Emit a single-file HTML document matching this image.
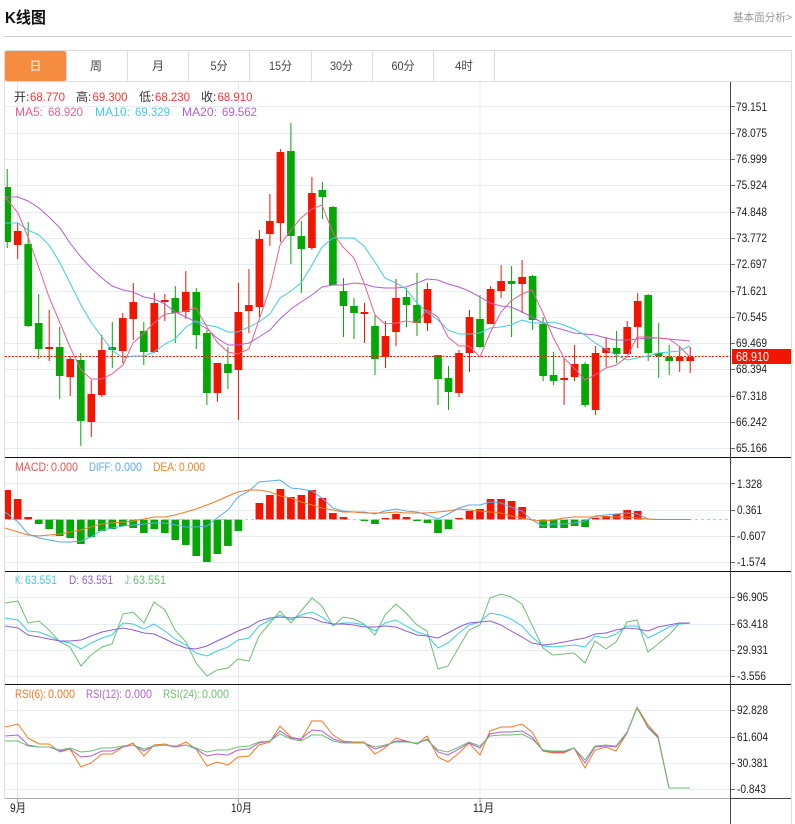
<!DOCTYPE html>
<html><head><meta charset="utf-8"><title>K线图</title>
<style>
html,body{margin:0;padding:0;background:#fff;width:795px;height:824px;overflow:hidden}
svg{display:block;font-family:"Liberation Sans","Noto Sans CJK SC",sans-serif}
.ax text{font-size:12px;fill:#222}
</style></head><body>
<svg width="795" height="824" viewBox="0 0 795 824" xmlns="http://www.w3.org/2000/svg">
<defs><clipPath id="c"><rect x="5" y="82" width="725" height="716"/></clipPath></defs>
<text x="5" y="23" font-size="16" font-weight="700" fill="#111" textLength="41" lengthAdjust="spacingAndGlyphs">K线图</text>
<text x="733" y="21" font-size="11" fill="#999" textLength="59" lengthAdjust="spacingAndGlyphs">基本面分析&gt;</text>
<path d="M4 36.5H792" stroke="#ccc" fill="none"/>
<path d="M4.5 50.5H791.5V824M4.5 50.5V798M4.5 81.5H791.5M66.5 50.5V81M127.5 50.5V81M188.5 50.5V81M249.5 50.5V81M311.5 50.5V81M372.5 50.5V81M433.5 50.5V81M494.5 50.5V81" stroke="#ddd" fill="none"/>
<rect x="5" y="51" width="61" height="30" rx="2" fill="#f58c40"/>
<g font-size="12" fill="#444" text-anchor="middle">
<text x="35.5" y="70" fill="#fff">日</text><text x="96" y="70">周</text><text x="158" y="70">月</text>
<text x="219" y="70" textLength="17" lengthAdjust="spacingAndGlyphs">5分</text><text x="280.5" y="70" textLength="23" lengthAdjust="spacingAndGlyphs">15分</text><text x="341.5" y="70" textLength="23" lengthAdjust="spacingAndGlyphs">30分</text><text x="403" y="70" textLength="23" lengthAdjust="spacingAndGlyphs">60分</text><text x="464" y="70" textLength="18" lengthAdjust="spacingAndGlyphs">4时</text>
</g>
<!-- grid -->
<path d="M5 106.5H730M5 133.5H730M5 159.5H730M5 185.5H730M5 212.5H730M5 238.5H730M5 264.5H730M5 291.5H730M5 317.5H730M5 343.5H730M5 369.5H730M5 396.5H730M5 422.5H730M5 448.5H730M5 483.5H730M5 510.5H730M5 536.5H730M5 562.5H730M5 597.5H730M5 624.5H730M5 650.5H730M5 676.5H730M5 710.5H730M5 737.5H730M5 763.5H730M5 789.5H730" stroke="#e6eef4" fill="none"/>
<path d="M17.5 82V798M238.5 82V798" stroke="#e2e9ef" fill="none"/>
<path d="M480 82V798" stroke="#e8eff6" fill="none"/>
<g clip-path="url(#c)" fill="none">
<!-- red wicks -->
<path stroke="#f21600" stroke-width="1" d="M17.7 223V259M49.2 310V361M70.2 356V396M91.3 380V437M101.8 335V397M122.8 313V363M133.3 283V340M154.3 293V353M164.8 294V321M185.8 271V319M217.4 363V402M238.4 283V420M248.9 269V333M259.4 230V317M269.9 194V246M280.4 149V242M311.9 177V250M364.5 303V343M385.5 321V368M396 279V346M427.5 283V331M459 350V397M469.5 310V372M490.6 286V324M501.1 265V298M522.1 260V313M564.1 358V405M574.6 345V381M595.6 346V415M606.1 337V367M627.2 321V354M637.7 293V348M679.7 347V372M690.2 347V373"/>
<!-- green wicks -->
<path stroke="#04a804" stroke-width="1" d="M7.2 169V248M28.2 222V327M38.7 294V359M59.7 327V399M80.8 353V446M112.3 322V368M143.8 322V365M175.3 286V343M196.3 288V349M206.9 330V405M227.9 347V389M290.9 123V264M301.4 221V293M322.4 182V219M332.9 206V285M343.5 278V337M354 298V339M375 315V375M406.5 288V327M417 273V336M438 355V405M448.5 366V410M480 295V348M511.6 266V337M532.6 275V330M543.1 317V381M553.6 352V385M585.1 362V407M616.6 331V363M648.2 294V361M658.7 323V378M669.2 345V375"/>
<!-- red bodies -->
<path stroke="#f21600" stroke-width="7.7" d="M17.7 231V245M49.2 347V349M70.2 359V377M91.3 394V422M101.8 350V395M122.8 318V351M133.3 302V319M154.3 303V352M164.8 300V302M185.8 292V312M217.4 363V393M238.4 312V370M248.9 305V311M259.4 239V307M269.9 221V234M280.4 152V223M311.9 193V248M364.5 312V314M385.5 336V357M396 298V332M427.5 289V323M459 353V393M469.5 317V353M490.6 289V324M501.1 281V291M522.1 277V284M564.1 378V380M574.6 364V377M595.6 353V410M606.1 348V353M627.2 327V354M637.7 301V327M679.7 357V361M690.2 357V361"/>
<!-- green bodies -->
<path stroke="#04a804" stroke-width="7.7" d="M7.2 187V242M28.2 244V326M38.7 323V349M59.7 347V376M80.8 360V421M112.3 347V350M143.8 331V352M175.3 298V313M196.3 292V335M206.9 333V393M227.9 364V373M290.9 151V236M301.4 236V249M322.4 190V197M332.9 207V285M343.5 291V306M354 306V313M375 326V359M406.5 297V305M417 305V323M438 355V379M448.5 378V392M480 319V347M511.6 281V284M532.6 276V320M543.1 324V376M553.6 375V381M585.1 364V405M616.6 348V354M648.2 295V353M658.7 353V356M669.2 357V361"/>
<!-- MACD bars -->
<path stroke="#f21600" stroke-width="7.7" d="M7.2 490V519.5M17.7 499V519.5M28.2 517V519.5M259.4 503V519.5M269.9 495V519.5M280.4 489V519.5M290.9 497V519.5M301.4 495V519.5M311.9 490V519.5M322.4 498V519.5M332.9 513V519.5M343.5 517V519.5M385.5 518V519.5M396 514V519.5M406.5 517V519.5M459 518V519.5M469.5 511V519.5M480 509V519.5M490.6 499V519.5M501.1 499V519.5M511.6 501V519.5M522.1 507V519.5M595.6 518V519.5M606.1 516V519.5M616.6 514V519.5M627.2 510V519.5M637.7 511V519.5"/>
<path stroke="#04a804" stroke-width="7.7" d="M38.7 519.5V524M49.2 519.5V529M59.7 519.5V536M70.2 519.5V538M80.8 519.5V544M91.3 519.5V537M101.8 519.5V531M112.3 519.5V529M122.8 519.5V526M133.3 519.5V528M143.8 519.5V533M154.3 519.5V529M164.8 519.5V533M175.3 519.5V540M185.8 519.5V545M196.3 519.5V556M206.9 519.5V562M217.4 519.5V554M227.9 519.5V546M238.4 519.5V531M364.5 519.5V521M375 519.5V524M417 519.5V521M427.5 519.5V523M438 519.5V533M448.5 519.5V529M543.1 519.5V528M553.6 519.5V528M564.1 519.5V528M574.6 519.5V526M585.1 519.5V527"/>
<path stroke="#8fdcec" stroke-width="1" stroke-dasharray="3 3" d="M5 519.5H730"/>
<path stroke="#f21600" stroke-width="1" stroke-dasharray="2 1.5" d="M5 356.5H730"/>
<!-- MA lines -->
<g stroke-width="1">
<polyline stroke="#b45fd0" points="5,197 18,197 28,201 39,208 49,217 60,228 70,243 81,257 91,268 102,278 112,286 123,290 133,292 144,297 154,299 165,304 175,312 186,317 196,322 207,329 217,338 228,345 238,345 249,343 259,337 270,330 280,319 291,309 301,302 312,295 322,287 333,285 343,285 354,283 364,284 375,287 385,288 396,288 406,287 417,283 427,279 438,280 448,284 459,287 469,291 480,297 490,303 501,306 511,307 522,312 532,317 543,323 553,327 564,330 574,333 585,334 595,335 606,338 616,340 627,340 637,339 648,338 658,338 669,339 679,340 690,341"/>
<polyline stroke="#3dcde0" points="5,223 18,223 28,230 39,235 49,245 60,263 70,283 81,305 91,322 102,337 112,350 123,358 133,356 144,356 154,352 165,344 175,339 186,327 196,321 207,325 217,327 228,332 238,332 249,327 259,322 270,314 280,298 291,291 301,283 312,265 322,247 333,238 343,238 354,238 364,246 375,262 385,278 396,283 406,289 417,303 427,312 438,320 448,330 459,334 469,334 480,333 490,328 501,327 511,325 522,320 532,323 543,323 553,322 564,325 574,329 585,335 595,343 606,349 616,355 627,360 637,358 648,356 658,353 669,352 679,351 690,346"/>
<polyline stroke="#ee5c92" points="5,197 18,213 28,237 39,268 49,297 60,323 70,347 81,370 91,379 102,379 112,374 123,365 133,343 144,333 154,323 165,314 175,313 186,311 196,308 207,327 217,342 228,352 238,354 249,349 259,320 270,288 280,245 291,230 301,218 312,209 322,205 333,233 343,247 354,258 364,283 375,315 385,324 396,323 406,321 417,323 427,310 438,317 448,337 459,346 469,346 480,357 490,333 501,312 511,301 522,294 532,290 543,313 553,337 564,358 574,368 585,380 595,375 606,368 616,365 627,357 637,337 648,337 658,338 669,339 679,346 690,357"/>
<!-- MACD lines -->
<polyline stroke="#55aaf0" points="5,512 18,522 28,534 39,538 49,540 60,542 70,542 81,541 91,537 102,530 112,528 123,526 133,525 144,524 154,523 165,523 175,525 186,527 196,527 207,526 217,518 228,510 238,497 249,491 259,482 270,481 280,480 291,488 301,489 312,491 322,498 333,508 343,511 354,512 364,512 375,514 385,511 396,509 406,511 417,512 427,515 438,519 448,514 459,508 469,505 480,505 490,502 501,503 511,507 522,511 532,520 543,526 553,524 564,524 574,523 585,521 595,516 606,515 616,514 627,513 637,514 648,519 658,519.5 690,519.5"/>
<polyline stroke="#f5791f" points="5,528 18,532 28,535 39,536 49,535 60,534 70,532 81,530 91,527 102,524 112,523 123,522 133,521 144,519 154,517 165,517 175,515 186,512 196,509 207,505 217,501 228,496 238,492 249,490 259,490 270,492 280,496 291,498 301,502 312,505 322,508 333,510 343,512 354,512 364,513 375,513 385,513 396,512 406,513 417,513 427,513 438,512 448,511 459,509 469,510 480,511 490,512 501,513 511,516 522,518 532,520 543,521 553,520 564,518 574,517 585,517 595,517 606,517 616,517 627,517 637,518 648,519 658,519.5 690,519.5"/>
<!-- KDJ -->
<polyline stroke="#6dbf72" points="5,603 18,601 28,623 39,621 49,630 60,642 70,647 81,666 91,655 102,647 112,644 123,614 133,612 144,623 154,602 165,610 175,630 186,642 196,663 207,676 217,670 228,668 238,659 249,661 259,636 270,623 280,611 291,623 301,611 312,598 322,606 333,626 343,617 354,619 364,624 375,635 385,615 396,604 406,613 417,625 427,631 438,669 448,666 459,647 469,630 480,625 490,598 501,594 511,597 522,604 532,625 543,648 553,655 564,654 574,653 585,663 595,641 606,649 616,642 627,622 637,620 648,652 658,644 669,635 679,624 690,623"/>
<polyline stroke="#3dcde0" points="5,618 18,620 28,631 39,632 49,636 60,641 70,643 81,649 91,643 102,638 112,635 123,623 133,624 144,629 154,624 165,631 175,639 186,645 196,653 207,656 217,651 228,647 238,640 249,638 259,626 270,620 280,615 291,620 301,615 312,612 322,617 333,625 343,623 354,623 364,625 375,631 385,623 396,620 406,626 417,632 427,635 438,648 448,643 459,633 469,625 480,622 490,613 501,615 511,619 522,626 532,637 543,646 553,647 564,646 574,645 585,647 595,636 606,638 616,634 627,626 637,626 648,638 658,633 669,627 679,624 690,623"/>
<polyline stroke="#8e5fd0" points="5,626 18,628 28,635 39,637 49,639 60,641 70,641 81,640 91,636 102,632 112,630 123,628 133,630 144,633 154,634 165,639 175,644 186,648 196,649 207,646 217,641 228,636 238,631 249,627 259,621 270,618 280,617 291,618 301,617 312,618 322,622 333,624 343,624 354,625 364,627 375,627 385,626 396,627 406,631 417,635 427,636 438,638 448,633 459,627 469,623 480,622 490,621 501,625 511,631 522,637 532,643 543,645 553,644 564,642 574,640 585,638 595,634 606,633 616,630 627,628 637,629 648,631 658,627 669,625 679,623 690,623"/>
<!-- RSI -->
<polyline stroke="#f5791f" points="5,727 18,724 28,738 39,744 49,744 60,752 70,749 81,767 91,763 102,754 112,754 123,747 133,743 144,756 154,745 165,744 175,747 186,742 196,749 207,766 217,762 228,765 238,757 249,756 259,745 270,742 280,726 291,737 301,740 312,721 322,721 333,735 343,741 354,742 364,742 375,754 385,748 396,738 406,741 417,744 427,736 438,757 448,762 459,753 469,743 480,755 490,731 501,727 511,727 522,724 532,732 543,751 553,753 564,753 574,748 585,768 595,750 606,747 616,751 627,733 637,707 648,725 658,736 669,788 690,788"/>
<polyline stroke="#b45fd0" points="5,736 18,735 28,745 39,747 49,747 60,751 70,749 81,757 91,756 102,751 112,751 123,747 133,745 144,751 154,746 165,745 175,747 186,745 196,749 207,756 217,754 228,755 238,750 249,749 259,743 270,741 280,731 291,738 301,739 312,730 322,731 333,739 343,742 354,743 364,743 375,749 385,746 396,741 406,741 417,744 427,739 438,752 448,755 459,749 469,743 480,748 490,734 501,732 511,732 522,731 532,737 543,751 553,752 564,752 574,748 585,763 595,747 606,746 616,747 627,733 637,708 648,727 658,737 669,788 690,788"/>
<polyline stroke="#6dbf72" points="5,741 18,741 28,746 39,747 49,747 60,750 70,748 81,752 91,751 102,748 112,748 123,746 133,745 144,749 154,746 165,745 175,746 186,745 196,748 207,752 217,750 228,750 238,747 249,746 259,742 270,741 280,734 291,739 301,741 312,735 322,735 333,741 343,743 354,743 364,743 375,747 385,745 396,742 406,742 417,743 427,740 438,750 448,752 459,747 469,742 480,746 490,736 501,735 511,735 522,734 532,739 543,750 553,751 564,751 574,748 585,760 595,746 606,745 616,746 627,732 637,708 648,728 658,738 669,788 690,788"/>
</g>
</g>
<!-- separators and axis -->
<path d="M5 457.5H791M5 571.5H791M5 684.5H791" stroke="#111" fill="none"/>
<path d="M5 798.5H730" stroke="#aaa" fill="none"/>
<path d="M730 798.5H791" stroke="#444" fill="none"/>
<path d="M730.5 82V824" stroke="#444" fill="none"/>
<path d="M731 106.5h4M731 133.5h4M731 159.5h4M731 185.5h4M731 212.5h4M731 238.5h4M731 264.5h4M731 291.5h4M731 317.5h4M731 343.5h4M731 369.5h4M731 396.5h4M731 422.5h4M731 448.5h4M731 483.5h4M731 510.5h4M731 536.5h4M731 562.5h4M731 597.5h4M731 624.5h4M731 650.5h4M731 676.5h4M731 710.5h4M731 737.5h4M731 763.5h4M731 789.5h4" stroke="#666" fill="none"/>
<path d="M17.5 799V803M238.5 799V803M480 799V803" stroke="#999" fill="none"/>
<g class="ax">
<text x="736" y="111" textLength="31" lengthAdjust="spacingAndGlyphs">79.151</text>
<text x="736" y="137" textLength="31" lengthAdjust="spacingAndGlyphs">78.075</text>
<text x="736" y="163" textLength="31" lengthAdjust="spacingAndGlyphs">76.999</text>
<text x="736" y="189" textLength="31" lengthAdjust="spacingAndGlyphs">75.924</text>
<text x="736" y="216" textLength="31" lengthAdjust="spacingAndGlyphs">74.848</text>
<text x="736" y="242" textLength="31" lengthAdjust="spacingAndGlyphs">73.772</text>
<text x="736" y="268" textLength="31" lengthAdjust="spacingAndGlyphs">72.697</text>
<text x="736" y="295" textLength="31" lengthAdjust="spacingAndGlyphs">71.621</text>
<text x="736" y="321" textLength="31" lengthAdjust="spacingAndGlyphs">70.545</text>
<text x="736" y="347" textLength="31" lengthAdjust="spacingAndGlyphs">69.469</text>
<text x="736" y="373" textLength="31" lengthAdjust="spacingAndGlyphs">68.394</text>
<text x="736" y="400" textLength="31" lengthAdjust="spacingAndGlyphs">67.318</text>
<text x="736" y="426" textLength="31" lengthAdjust="spacingAndGlyphs">66.242</text>
<text x="736" y="452" textLength="31" lengthAdjust="spacingAndGlyphs">65.166</text>
<text x="737" y="488" textLength="25" lengthAdjust="spacingAndGlyphs">1.328</text>
<text x="737" y="514" textLength="25" lengthAdjust="spacingAndGlyphs">0.361</text>
<text x="737" y="540" textLength="29" lengthAdjust="spacingAndGlyphs">-0.607</text>
<text x="737" y="566" textLength="29" lengthAdjust="spacingAndGlyphs">-1.574</text>
<text x="737" y="601" textLength="31" lengthAdjust="spacingAndGlyphs">96.905</text>
<text x="737" y="628" textLength="31" lengthAdjust="spacingAndGlyphs">63.418</text>
<text x="737" y="654" textLength="31" lengthAdjust="spacingAndGlyphs">29.931</text>
<text x="737" y="680" textLength="29" lengthAdjust="spacingAndGlyphs">-3.556</text>
<text x="737" y="714" textLength="31" lengthAdjust="spacingAndGlyphs">92.828</text>
<text x="737" y="741" textLength="31" lengthAdjust="spacingAndGlyphs">61.604</text>
<text x="737" y="767" textLength="31" lengthAdjust="spacingAndGlyphs">30.381</text>
<text x="737" y="793" textLength="29" lengthAdjust="spacingAndGlyphs">-0.843</text>
<text x="10" y="812" textLength="16" lengthAdjust="spacingAndGlyphs">9月</text>
<text x="231" y="812" textLength="21" lengthAdjust="spacingAndGlyphs">10月</text>
<text x="473" y="812" textLength="21" lengthAdjust="spacingAndGlyphs">11月</text>
</g>
<rect x="732" y="349" width="59" height="15" fill="#f21600"/>
<text x="736" y="361" font-size="13" fill="#fff" textLength="33" lengthAdjust="spacingAndGlyphs">68.910</text>
<!-- legends -->
<g font-size="12">
<text x="14" y="101" fill="#333">开:</text><text x="30" y="101" fill="#f33" textLength="35" lengthAdjust="spacingAndGlyphs">68.770</text>
<text x="76" y="101" fill="#333">高:</text><text x="92.5" y="101" fill="#f33" textLength="35" lengthAdjust="spacingAndGlyphs">69.300</text>
<text x="139" y="101" fill="#333">低:</text><text x="155" y="101" fill="#f33" textLength="35" lengthAdjust="spacingAndGlyphs">68.230</text>
<text x="201" y="101" fill="#333">收:</text><text x="217.5" y="101" fill="#f33" textLength="35" lengthAdjust="spacingAndGlyphs">68.910</text>
<g fill="#ee5c92"><text x="15" y="116" textLength="28" lengthAdjust="spacingAndGlyphs">MA5:</text><text x="48" y="116" textLength="35" lengthAdjust="spacingAndGlyphs">68.920</text></g>
<g fill="#3dcde0"><text x="95" y="116" textLength="35" lengthAdjust="spacingAndGlyphs">MA10:</text><text x="135" y="116" textLength="35" lengthAdjust="spacingAndGlyphs">69.329</text></g>
<g fill="#b45fd0"><text x="182" y="116" textLength="35" lengthAdjust="spacingAndGlyphs">MA20:</text><text x="222" y="116" textLength="35" lengthAdjust="spacingAndGlyphs">69.562</text></g>
<g fill="#f05050"><text x="15" y="471" textLength="34" lengthAdjust="spacingAndGlyphs">MACD:</text><text x="51" y="471" textLength="27" lengthAdjust="spacingAndGlyphs">0.000</text></g>
<g fill="#5aa9ee"><text x="89" y="471" textLength="24" lengthAdjust="spacingAndGlyphs">DIFF:</text><text x="115" y="471" textLength="27" lengthAdjust="spacingAndGlyphs">0.000</text></g>
<g fill="#f5822a"><text x="153" y="471" textLength="24" lengthAdjust="spacingAndGlyphs">DEA:</text><text x="179" y="471" textLength="26" lengthAdjust="spacingAndGlyphs">0.000</text></g>
<g fill="#3dcde0"><text x="15" y="584" textLength="8" lengthAdjust="spacingAndGlyphs">K:</text><text x="25" y="584" textLength="32" lengthAdjust="spacingAndGlyphs">63.551</text></g>
<g fill="#8e5fd0"><text x="69" y="584" textLength="10" lengthAdjust="spacingAndGlyphs">D:</text><text x="82" y="584" textLength="31" lengthAdjust="spacingAndGlyphs">63.551</text></g>
<g fill="#6dbf72"><text x="125" y="584" textLength="6" lengthAdjust="spacingAndGlyphs">J:</text><text x="133" y="584" textLength="33" lengthAdjust="spacingAndGlyphs">63.551</text></g>
<g fill="#f5791f"><text x="15" y="698" textLength="31" lengthAdjust="spacingAndGlyphs">RSI(6):</text><text x="48" y="698" textLength="27" lengthAdjust="spacingAndGlyphs">0.000</text></g>
<g fill="#b45fd0"><text x="86" y="698" textLength="36" lengthAdjust="spacingAndGlyphs">RSI(12):</text><text x="125" y="698" textLength="27" lengthAdjust="spacingAndGlyphs">0.000</text></g>
<g fill="#6dbf72"><text x="163" y="698" textLength="37" lengthAdjust="spacingAndGlyphs">RSI(24):</text><text x="202" y="698" textLength="27" lengthAdjust="spacingAndGlyphs">0.000</text></g>
</g>
</svg>
</body></html>
